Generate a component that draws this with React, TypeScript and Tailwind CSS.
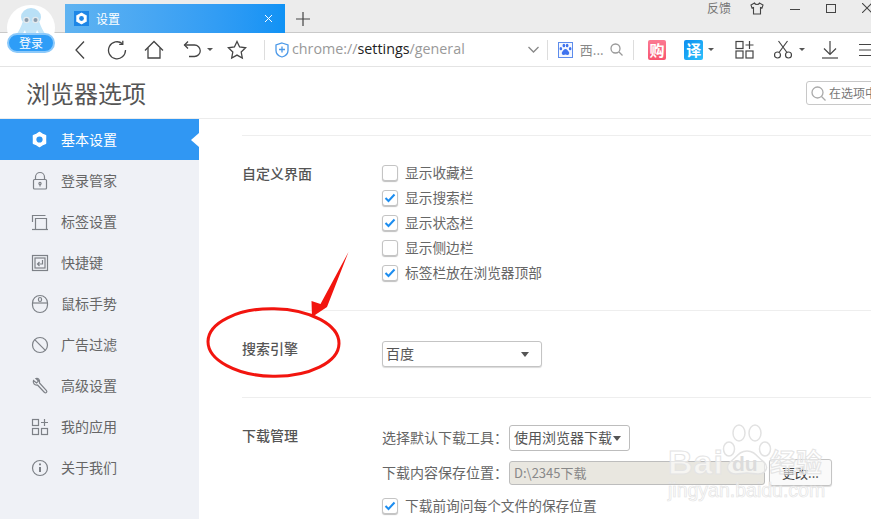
import React from "react";

const font = { fontFamily: '"Noto Sans CJK SC", "Liberation Sans", sans-serif' };

const Ic = ({ children, w = 20, h = 20, sw = 1.3, color = "#444", className = "" }: any) => (
  <svg width={w} height={h} viewBox={`0 0 ${w} ${h}`} fill="none" stroke={color} strokeWidth={sw} className={`shrink-0 ${className}`}>
    {children}
  </svg>
);

const Caret = ({ c = "#555", className = "" }: { c?: string; className?: string }) => (
  <span
    className={`inline-block shrink-0 w-0 h-0 border-x-[3px] border-x-transparent border-t-[3px] ${className}`}
    style={{ borderTopColor: c }}
  />
);

const Gear = ({ size = 18, fill = "#fff", hole = "#3097f3" }: any) => (
  <svg width={size} height={size} viewBox="0 0 18 18" className="shrink-0">
    <path
      fill={fill}
      stroke={fill}
      strokeWidth="1.400"
      strokeLinejoin="round"
      d="M9 1.500 12.200 3.500 15.500 5 15.400 9 15.500 13 12.200 14.500 9 16.500 5.800 14.500 2.500 13 2.600 9 2.500 5 5.800 3.500z"
    />
    <circle cx="9" cy="9" r="3.300" fill={hole} />
  </svg>
);

const sideIcons: Record<string, React.ReactNode> = {
  lock: (
    <>
      <path d="M5.500 8.500V6a4.500 4.500 0 0 1 9 0v2.500" />
      <rect x="3.500" y="8.500" width="13" height="9.500" rx="1" />
      <circle cx="10" cy="12.500" r="1.100" />
      <path d="M10 13.500v2" />
    </>
  ),
  tab: (
    <>
      <path d="M2.500 10V3.500h13" />
      <path d="M5.500 17V6.500h11V17" />
      <path d="M2 17.500h16" />
    </>
  ),
  key: (
    <>
      <rect x="2.500" y="2.500" width="15" height="15" />
      <rect x="5" y="5" width="10" height="10" />
      <path d="M12.500 7v4H8M9.500 9 7.500 11l2 2" />
    </>
  ),
  mouse: (
    <>
      <rect x="2.500" y="1.500" width="15" height="17" rx="7.500" />
      <path d="M2.500 9h15" />
      <rect x="8.500" y="3.500" width="3" height="4" rx="1.500" />
    </>
  ),
  ban: (
    <>
      <circle cx="10" cy="10" r="7.500" />
      <path d="M4.700 4.700 15.300 15.300" />
    </>
  ),
  wrench: <path d="M6 2.500 8.500 5 6.500 7 3.500 4.500C2.500 7 4.500 9.500 7.500 9l7 7.500c1.500 1 3-.5 2-2L9.500 7c.5-3-1-5-3.500-4.500z" />,
  apps: (
    <>
      <rect x="2.500" y="2.500" width="6" height="6" />
      <rect x="2.500" y="11.500" width="6" height="6" />
      <rect x="11.500" y="11.500" width="6" height="6" />
      <path d="M14.500 2v7M11 5.500h7" />
    </>
  ),
  info: (
    <>
      <circle cx="10" cy="10" r="7.500" />
      <path d="M10 9v5" strokeWidth="2" />
      <path d="M10 5.500v1.800" strokeWidth="2" />
    </>
  ),
};

const sideItems = [
  ["lock", "登录管家"],
  ["tab", "标签设置"],
  ["key", "快捷键"],
  ["mouse", "鼠标手势"],
  ["ban", "广告过滤"],
  ["wrench", "高级设置"],
  ["apps", "我的应用"],
  ["info", "关于我们"],
];

const Check = ({ on, label }: { on?: boolean; label: string }) => (
  <div className="h-[25px] flex items-center">
    <span className="w-[16px] h-[16px] rounded-[3px] border border-[#c4c4c4] bg-white shadow-[0_1px_1px_rgba(0,0,0,0.25)] flex items-center justify-center shrink-0">
      {on && (
        <svg width="12" height="10" viewBox="0 0 12 10" fill="none" stroke="#1c8df0" strokeWidth="2">
          <path d="M1.500 5 4.500 8 10.500 1.500" />
        </svg>
      )}
    </span>
    <span className="ml-[7px] text-[13.700px] text-[#666] leading-none">{label}</span>
  </div>
);

const Section = ({ title, titleClass, className, children }: any) => (
  <div className={`flex border-b border-[#eeeeee] ${className}`}>
    <div className={`w-[140px] shrink-0 text-[14px] font-medium text-[#555] leading-[20px] ${titleClass}`}>{title}</div>
    <div className="flex-1 min-w-0">{children}</div>
  </div>
);

export default function App() {
  return (
    <div style={font} className="relative w-[871px] h-[519px] overflow-hidden bg-white">
      {/* Title bar */}
      <div className="h-[33px] bg-[#ececec] border-b border-[#c9c9c9] flex">
        <div className="ml-[65px] mt-[4px] w-[220px] h-[29px] bg-gradient-to-r from-[#5fb3f1] to-[#0f92f5] flex items-center pl-[9px] pr-[12px]">
          <span className="w-[15px] h-[15px] bg-[#1d86e6] flex items-center justify-center">
            <Gear size={13} hole="#1d86e6" />
          </span>
          <span className="ml-[7px] text-[12px] text-white leading-none">设置</span>
          <svg width="9" height="9" viewBox="0 0 9 9" stroke="#fff" strokeWidth="1" className="ml-auto">
            <path d="M1 1l7 7M8 1 1 8" />
          </svg>
        </div>
        <svg width="14" height="14" viewBox="0 0 14 14" stroke="#444" strokeWidth="1.200" className="ml-[11px] mt-[12px]">
          <path d="M7 0v14M0 7h14" />
        </svg>
        <div className="ml-auto flex items-start">
          <span className="text-[12px] text-[#777] leading-[16px]">反馈</span>
          <svg width="14" height="13" viewBox="0 0 14 13" fill="none" stroke="#444" strokeWidth="1.100" className="ml-[19px] mt-[2px]">
            <path d="M4.500 1 1 3l1 3 1.500-.5V12h7V5.500L12 6l1-3-3.500-2C9 3 5 3 4.500 1z" />
          </svg>
          <span className="ml-[26px] mt-[9px] w-[10px] h-[1px] bg-[#444]" />
          <span className="ml-[26px] mt-[4px] w-[10px] h-[9px] border border-[#444]" />
          <svg width="10" height="10" viewBox="0 0 10 10" stroke="#444" strokeWidth="1.100" className="ml-[26px] mt-[3px] mr-[-1px]">
            <path d="M0 0l10 10M10 0 0 10" />
          </svg>
        </div>
      </div>

      {/* Toolbar */}
      <div className="h-[34px] border-b border-[#e4e4e4] flex items-center bg-white">
        <Ic w={12} h={20} className="ml-[74px]">
          <path d="M10 1.500 2 10l8 8.500" />
        </Ic>
        <Ic w={20} h={20} className="ml-[21px]">
          <path d="M15.500 3.800A8.500 8.500 0 1 0 18.500 10" />
          <path d="M15.800 0.800v3.500h-3.600" />
        </Ic>
        <Ic w={20} h={20} className="ml-[17px]">
          <path d="M1 10.500 10 1.500l9 9" />
          <path d="M4 8v10h12V8" />
        </Ic>
        <Ic w={18} h={20} className="ml-[19px]">
          <path d="M5 1.500 1.500 5 5 8.500" />
          <path d="M1.500 5h10a5 5 0 0 1 0 11.500H6" />
        </Ic>
        <Caret className="ml-[6px]" />
        <Ic w={20} h={20} className="ml-[14px]">
          <path d="M10 1.500l2.600 5.500 6 .8-4.400 4.200 1.100 6L10 15.100 4.700 18l1.100-6L1.400 7.800l6-.8z" />
        </Ic>
        <span className="ml-[17px] w-[1px] h-[20px] bg-[#dddddd]" />
        <Ic w={14} h={16} color="#4a98e8" className="ml-[10px]">
          <path d="M7 1 13 3v5.500c0 3-2.500 5.500-6 6.500-3.500-1-6-3.500-6-6.500V3z" />
          <path d="M7 4.500v6M4 7.500h6" />
        </Ic>
        <span className="ml-[3px] w-[175px] text-[14.300px] leading-none whitespace-nowrap text-[#999]" style={{ fontFamily: '"Open Sans", sans-serif' }}>
          chrome://<span className="text-[#222]">settings</span>/general
        </span>
        <Ic w={11} h={7} color="#888" className="ml-[63px]">
          <path d="M.5 1 5.500 6l5-5" />
        </Ic>
        <span className="ml-[8px] w-[1px] h-[20px] bg-[#dddddd]" />
        <span className="ml-[10px] w-[16px] h-[16px] border border-[#5d8cec] bg-[#f4f7fe] flex items-center justify-center">
          <svg width="13" height="13" viewBox="0 0 12 12" fill="#3f73ee">
            <path d="M6 5.500c-1.500 0-2 1.500-3 2.500-1 1.200-.3 3 1.200 3 .8 0 1.200-.3 1.800-.3s1 .3 1.800.3c1.500 0 2.200-1.800 1.200-3-1-1-1.500-2.500-3-2.500z" />
            <ellipse cx="1.700" cy="5.300" rx="1.200" ry="1.500" />
            <ellipse cx="4.500" cy="2.300" rx="1.200" ry="1.700" />
            <ellipse cx="7.500" cy="2.300" rx="1.200" ry="1.700" />
            <ellipse cx="10.300" cy="5.300" rx="1.200" ry="1.500" />
          </svg>
        </span>
        <span className="ml-[7px] w-[32px] text-[13px] text-[#888] leading-none whitespace-nowrap">西...</span>
        <Ic w={13} h={13} color="#999">
          <circle cx="5.500" cy="5.500" r="4.500" />
          <path d="M9 9l3.500 3.500" />
        </Ic>
        <span className="ml-[10px] w-[1px] h-[20px] bg-[#dddddd]" />
        <span className="ml-[14px] w-[20px] h-[20px] rounded-[2px] bg-gradient-to-b from-[#fb7a92] to-[#f8546f] flex items-center justify-center text-[15px] font-bold text-white leading-none">购</span>
        <span className="ml-[18px] w-[20px] h-[20px] rounded-[2px] bg-gradient-to-br from-[#0f8ef0] to-[#2cc0fb] flex items-center justify-center text-[15px] font-bold text-white leading-none">译</span>
        <Caret className="ml-[5px]" />
        <Ic w={19} h={19} sw={1.2} className="ml-[21px]">
          <rect x="1" y="1.500" width="7" height="7" />
          <rect x="1" y="11" width="7" height="7" />
          <rect x="11" y="11" width="7" height="7" />
          <path d="M14.500 1v8M10.500 5h8" />
        </Ic>
        <Ic w={18} h={19} sw={1.2} className="ml-[20px]">
          <circle cx="3.500" cy="15" r="3" />
          <circle cx="14.500" cy="15" r="3" />
          <path d="M5 12.500 13.500 1M13 12.500 4.500 1" />
        </Ic>
        <Caret className="ml-[7px]" />
        <Ic w={18} h={19} sw={1.2} className="ml-[16px]">
          <path d="M9 1v13M3 8.500l6 6 6-6" />
          <path d="M1 18h16" />
        </Ic>
        <Ic w={12} h={14} sw={1.2} className="ml-[20px]">
          <path d="M0 1.500h12M0 7h12M0 12.500h12" />
        </Ic>
      </div>

      {/* Page header */}
      <div className="h-[52px] border-b border-[#ececec] flex items-center pl-[26px]">
        <h1 className="text-[24px] font-normal text-[#555] leading-none">浏览器选项</h1>
        <div className="ml-auto mr-[-60px] w-[125px] h-[24px] mt-[1px] border border-[#c8c8c8] rounded-[3px] flex items-center pl-[4px]">
          <Ic w={15} h={15} color="#aaa">
            <circle cx="6.500" cy="6.500" r="5.500" />
            <path d="M10.500 10.500l4 4" />
          </Ic>
          <span className="ml-[3px] text-[12px] text-[#777] leading-none whitespace-nowrap">在选项中</span>
        </div>
      </div>

      {/* Body */}
      <div className="flex h-[400px]">
        <aside className="w-[199px] shrink-0 bg-[#eff1f6]">
          <div className="relative h-[41px] bg-[#3097f3] flex items-center pl-[31px]">
            <Gear size={17} />
            <span className="ml-[13px] text-[14px] text-white leading-none -translate-y-px">基本设置</span>
            <span className="absolute right-0 top-[14px] w-0 h-0 border-y-[7px] border-y-transparent border-r-[8px] border-r-white" />
          </div>
          {sideItems.map(([ic, label]) => (
            <div key={label} className="h-[41px] flex items-center pl-[30px]">
              <Ic w={20} h={20} sw={1.2} color="#7d8187">
                {sideIcons[ic]}
              </Ic>
              <span className="ml-[11px] text-[14px] text-[#666] leading-none -translate-y-px">{label}</span>
            </div>
          ))}
        </aside>

        <main className="flex-1 min-w-0 pl-[43px]">
          <div className="h-[17px] border-b border-[#eeeeee]" />
          <Section title="自定义界面" titleClass="pt-[27px]" className="h-[175px]">
            <div className="pt-[24px]">
              <Check label="显示收藏栏" />
              <Check on label="显示搜索栏" />
              <Check on label="显示状态栏" />
              <Check label="显示侧边栏" />
              <Check on label="标签栏放在浏览器顶部" />
            </div>
          </Section>
          <Section title="搜索引擎" titleClass="pt-[27px]" className="h-[87px]">
            <div className="pt-[30px]">
              <div className="w-[160px] h-[26px] bg-white border border-[#c4c4c4] rounded-[3px] shadow-[0_1px_1px_rgba(0,0,0,0.15)] flex items-center pl-[3px] pr-[12px] text-[14px] text-[#555] leading-none">
                <span className="-translate-y-px">百度</span>
                <span className="ml-auto w-0 h-0 border-x-[4px] border-x-transparent border-t-[5px] border-t-[#555]" />
              </div>
            </div>
          </Section>
          <div className="flex pt-[27px]">
            <div className="w-[140px] shrink-0 text-[14px] font-medium text-[#555] leading-[20px]">下载管理</div>
            <div className="flex-1 min-w-0 text-[14px] text-[#666] leading-none">
              <div className="flex items-center h-[26px]">
                <span className="w-[127px] -translate-y-px">选择默认下载工具：</span>
                <div className="w-[121px] h-[26px] bg-white border border-[#bdbdbd] rounded-[3px] flex items-center pl-[4px] text-[#555]">
                  <span className="-translate-y-px">使用浏览器下载</span>
                  <span className="ml-[1px] w-0 h-0 border-x-[4px] border-x-transparent border-t-[5px] border-t-[#555]" />
                </div>
              </div>
              <div className="flex items-center h-[27px] mt-[8px]">
                <span className="w-[127px] -translate-y-px">下载内容保存位置：</span>
                <div className="w-[256px] h-[24px] bg-[#e9e7e0] border border-[#bdbdbd] rounded-[3px] flex items-center pl-[4px] text-[13px] text-[#888]">D:\2345下载</div>
                <div className="ml-[4px] w-[63px] h-[27px] bg-[#fafafa] border border-[#c4c4c4] rounded-[3px] shadow-[0_1px_1px_rgba(0,0,0,0.15)] flex items-center justify-center text-[13px] text-[#444]">更改...</div>
              </div>
              <div className="mt-[7px]">
                <Check on label="下载前询问每个文件的保存位置" />
              </div>
            </div>
          </div>
        </main>
      </div>

      {/* Avatar over the tab strip */}
      <div className="absolute left-[7px] top-[5px] w-[48px] h-[46px] rounded-full bg-white overflow-hidden flex justify-center">
        <svg width="30" height="29" viewBox="0 0 30 29" className="mt-[2px]">
          <ellipse cx="15" cy="10" rx="10" ry="9" fill="#b9e0f6" />
          <path d="M7 14C5 20 3 24 0 28h6l3-5 2 6h8l2-6 3 5h6c-3-4-5-8-7-14z" fill="#c3e5f8" />
          <circle cx="10.500" cy="13" r="3.300" fill="#e3e9ee" />
          <circle cx="19.500" cy="13" r="3.300" fill="#e3e9ee" />
          <circle cx="10.500" cy="13" r="2" fill="#8b9cac" />
          <circle cx="19.500" cy="13" r="2" fill="#8b9cac" />
        </svg>
      </div>
      <div className="absolute left-[7px] top-[33px] w-[48px] h-[20px] rounded-full bg-[#2e9df7] border-[2px] border-[#8cc9fa] flex items-center justify-center text-[12px] text-white leading-none">登录</div>

      {/* Watermark */}
      <div className="absolute left-[665px] top-[422px] w-[175px] h-[97px] pointer-events-none">
        <svg width="50" height="52" viewBox="0 0 50 52" fill="#ffffff90" stroke="#e2e2e2" strokeWidth="1.500" className="absolute left-[57px] top-[2px]">
          <path d="M25 27c-8 0-10 6-17 11-5 5-2 12 6 12 4 0 7-1 11-1s7 1 11 1c8 0 11-7 6-12-7-5-9-11-17-11z" />
          <ellipse cx="7" cy="25" rx="5.500" ry="7" />
          <ellipse cx="17" cy="9" rx="6" ry="8" />
          <ellipse cx="33" cy="9" rx="6" ry="8" />
          <ellipse cx="43" cy="25" rx="5.500" ry="7" />
        </svg>
        <span className="absolute left-[3px] top-[23px] text-[34px] font-bold tracking-[1px] leading-none text-white/60 [-webkit-text-stroke:1px_#e4e4e4]" style={{ fontFamily: '"Liberation Sans", sans-serif' }}>Bai</span>
        <span className="absolute left-[67px] top-[31px] text-[21px] font-bold leading-none text-[#dcdcdc]" style={{ fontFamily: '"Liberation Sans", sans-serif' }}>du</span>
        <span className="absolute left-[105px] top-[26px] text-[26px] font-bold leading-none text-white/50 [-webkit-text-stroke:1px_#e4e4e4]">经验</span>
        <span className="absolute left-[3px] top-[59px] text-[19.500px] leading-none whitespace-nowrap text-white/50 [-webkit-text-stroke:0.7px_#e4e4e4]" style={{ fontFamily: '"Liberation Sans", sans-serif' }}>jingyan.baidu.com</span>
      </div>

      {/* Red annotation */}
      <svg width="150" height="135" viewBox="0 0 150 135" fill="none" className="absolute left-[200px] top-[247px] pointer-events-none">
        <ellipse cx="73.500" cy="95.500" rx="65.500" ry="33.800" stroke="#f2150f" strokeWidth="3" transform="rotate(1 73.500 95.500)" />
        <path d="M148.500 5 127 60l-15 10-.5-16 9 3z" fill="#f2150f" />
      </svg>
    </div>
  );
}
